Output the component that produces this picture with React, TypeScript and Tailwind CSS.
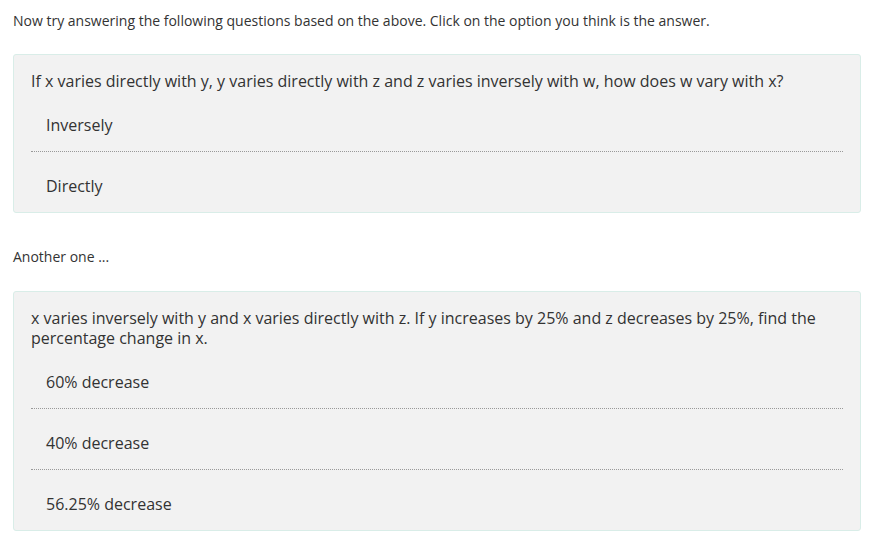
type Question = {
  text: string;
  options: string[];
};

const questions: Question[] = [
  {
    text: "If x varies directly with y, y varies directly with z and z varies inversely with w, how does w vary with x?",
    options: ["Inversely", "Directly"],
  },
  {
    text: "x varies inversely with y and x varies directly with z. If y increases by 25% and z decreases by 25%, find the percentage change in x.",
    options: ["60% decrease", "40% decrease", "56.25% decrease"],
  },
];

function QuestionCard({ question }: { question: Question }) {
  return (
    <div className="rounded-[3px] border border-[#d9ede8] bg-[#f2f2f2] px-[17px] pt-[16px]">
      <p className="text-[16px] leading-[20px] text-[#333]">{question.text}</p>
      <div>
        {question.options.map((option, i) => (
          <div
            key={option}
            className={`cursor-pointer pl-[15px] pt-[23px] pb-[15px] text-[16px] leading-[22px] text-[#333] ${
              i < question.options.length - 1 ? "border-b border-dotted border-[#999]" : ""
            }`}
          >
            {option}
          </div>
        ))}
      </div>
    </div>
  );
}

export default function App() {
  return (
    <div
      className="min-h-screen bg-white px-[13px] pt-[11px]"
      style={{ fontFamily: '"Open Sans", sans-serif' }}
    >
      <p className="text-[14px] leading-[20px] text-[#333]">
        Now try answering the following questions based on the above. Click on the option you think is the answer.
      </p>
      <div className="mt-[23px] mr-[8px]">
        <QuestionCard question={questions[0]} />
      </div>
      <p className="mt-[34px] text-[14px] leading-[20px] text-[#333]">Another one ...</p>
      <div className="mt-[24px] mr-[8px]">
        <QuestionCard question={questions[1]} />
      </div>
    </div>
  );
}
